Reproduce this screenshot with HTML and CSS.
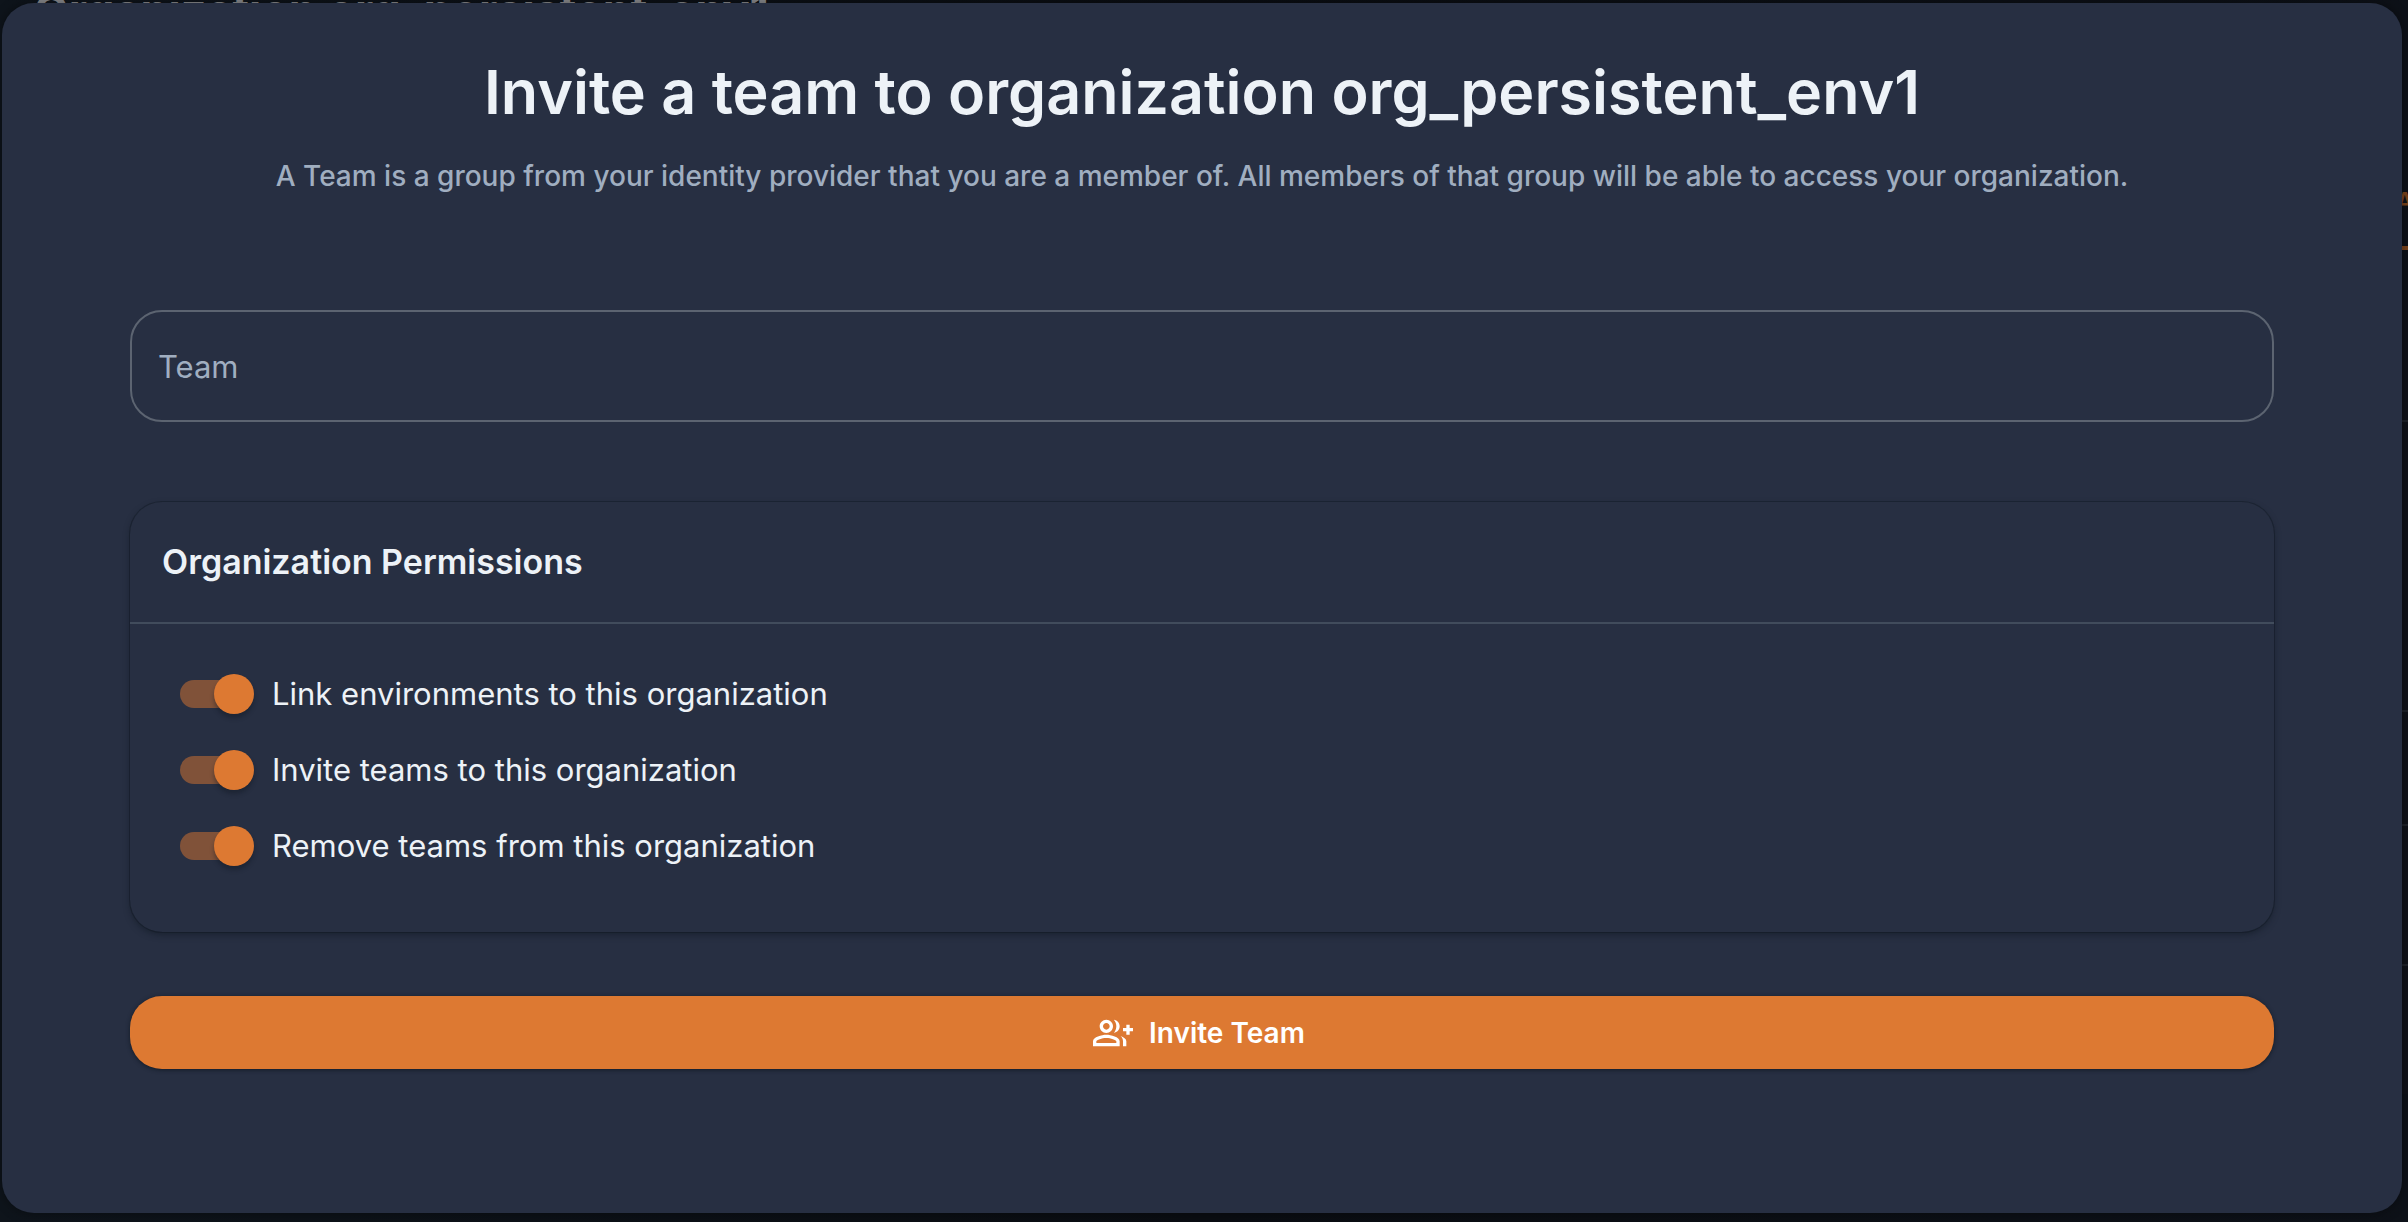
FILE: index.html
```html
<!DOCTYPE html>
<html lang="en">
<head>
<meta charset="utf-8">
<meta name="viewport" content="width=device-width, initial-scale=1">
<title>Invite a team</title>
<link rel="stylesheet" href="styles.css">
</head>
<body>
<div class="backdrop" aria-hidden="true">
  <div class="backdrop-title">Organization org_persistent_env1</div>
  <div class="backdrop-tab">A</div>
  <div class="backdrop-panel"><div class="backdrop-row"></div><div class="backdrop-row"></div><div class="backdrop-row"></div><div class="backdrop-row"></div></div>
</div>
<main class="dialog" role="dialog" aria-labelledby="dialog-title">
  <h1 class="dialog-title" id="dialog-title">Invite a team to organization org_persistent_env1</h1>
  <p class="dialog-text">A Team is a group from your identity provider that you are a member of. All members of that group will be able to access your organization.</p>
  <form class="form">
    <input class="field" type="text" placeholder="Team" aria-label="Team">
    <section class="card">
      <h2 class="card-title">Organization Permissions</h2>
      <div class="options">
        <label class="option"><input class="switch" type="checkbox" checked>Link environments to this organization</label>
        <label class="option"><input class="switch" type="checkbox" checked>Invite teams to this organization</label>
        <label class="option"><input class="switch" type="checkbox" checked>Remove teams from this organization</label>
      </div>
    </section>
    <button class="submit" type="button">
      <svg class="submit-icon" viewBox="0 0 24 24" aria-hidden="true"><path d="M22 9V7h-2v2h-2v2h2v2h2v-2h2V9zM8 12c2.210 0 4-1.790 4-4s-1.790-4-4-4-4 1.790-4 4 1.790 4 4 4zm0-6c1.100 0 2 .9 2 2s-.9 2-2 2-2-.9-2-2 .9-2 2-2zM8 13c-2.670 0-8 1.340-8 4v3h16v-3c0-2.660-5.330-4-8-4zm6 5H2v-.990C2.200 16.290 5.300 15 8 15s5.800 1.290 6 2v1zM12.510 4.050C13.430 5.110 14 6.490 14 8s-.570 2.890-1.490 3.950C14.470 11.700 16 10.040 16 8s-1.530-3.700-3.490-3.950zM16.530 13.830C17.420 14.660 18 15.700 18 17v3h2v-3c0-1.450-1.590-2.510-3.470-3.170z"/></svg>
      Invite Team
    </button>
  </form>
</main>
</body>
</html>
```
FILE: styles.css
```css
* { box-sizing: border-box; }
html { min-height: 100%; background: #0b0e14; }
body {
  margin: 0;
  padding: 3px 6px 9px 2px;
  min-height: 100vh;
  display: flex;
  position: relative;
  overflow: hidden;
  font-family: Inter, sans-serif;
  color: #edf2f7;
}
.backdrop { position: absolute; inset: 0; overflow: hidden; background: linear-gradient(90deg, #0e141b, #0a0d12 50%, #0d1118); }
.backdrop-title { position: absolute; left: 34px; top: -12px; font-size: 45px; line-height: 45px; font-weight: 700; color: #8a8b8e; }
.backdrop-tab { position: absolute; left: calc(100% - 12px); top: 190px; width: 60px; height: 60px; border-bottom: 4px solid #7a431b; font-size: 24px; line-height: 24px; font-weight: 600; color: #7a431b; }
.backdrop-panel { position: absolute; left: 32px; right: 0; top: 300px; height: 794px; display: grid; grid-template-rows: 122px 290px 114px 140px; background: #101219; }
.backdrop-row { border-bottom: 2px solid #1f2229; }
.dialog {
  position: relative;
  flex: 1;
  padding: 53px 128px 144px;
  border-radius: 32px;
  background: #272f42;
  box-shadow: 0 0 12px rgba(0, 0, 0, .4);
}
.dialog-title { margin: 0; text-align: center; font-size: 61px; line-height: 72px; font-weight: 600; }
.dialog-text { margin: 32px 0 0; text-align: center; font-size: 28px; line-height: 32px; font-weight: 500; color: #a0aec0; }
.form { margin-top: 118px; display: flex; flex-direction: column; }
.field {
  height: 112px;
  padding: 0 26px;
  border: 2px solid #5c6471;
  border-radius: 32px;
  background: transparent;
  color: #edf2f7;
  font: 400 31px/40px Inter, sans-serif;
}
.field::placeholder { color: #a0aec0; opacity: 1; }
.card {
  margin-top: 80px;
  border-radius: 32px;
  box-shadow: 0 3px 6px rgba(14, 22, 32, .5), 0 0 0 1px rgba(20, 28, 38, .5);
}
.card-title { margin: 0; padding: 40px 32px; border-bottom: 2px solid #414c5c; font-size: 34px; line-height: 40px; font-weight: 600; }
.options { padding: 32px 48px 48px; }
.option { display: flex; align-items: center; gap: 18px; height: 76px; font-size: 31px; line-height: 40px; }
.switch {
  appearance: none;
  position: relative;
  margin: 0;
  width: 76px;
  height: 40px;
}
.switch::before {
  content: "";
  position: absolute;
  left: 2px;
  top: 6px;
  width: 68px;
  height: 28px;
  border-radius: 14px;
  background: #805239;
}
.switch::after {
  content: "";
  position: absolute;
  right: 0;
  top: 0;
  width: 40px;
  height: 40px;
  border-radius: 50%;
  background: #dd7932;
  box-shadow: 0 4px 4px rgba(14, 22, 32, .4);
}
.submit {
  margin-top: 64px;
  height: 73px;
  display: flex;
  align-items: center;
  justify-content: center;
  gap: 16px;
  padding: 0 6px 0 0;
  border: 0;
  border-radius: 32px;
  background: #dd7932;
  color: #fff;
  font: 600 28px/32px Inter, sans-serif;
  box-shadow: 0 1px 4px rgba(14, 22, 32, .8);
}
.submit-icon { width: 40px; height: 40px; fill: currentColor; }
```
